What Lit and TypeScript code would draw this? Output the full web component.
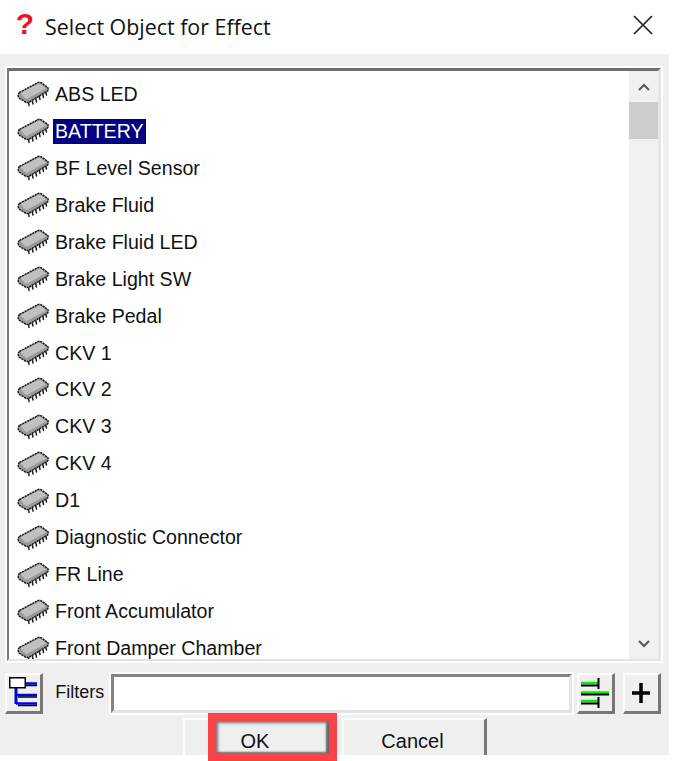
import { LitElement, html, css, svg } from "lit";
import { customElement } from "lit/decorators.js";

const ITEMS = ["ABS LED","BATTERY","BF Level Sensor","Brake Fluid","Brake Fluid LED","Brake Light SW","Brake Pedal","CKV 1","CKV 2","CKV 3","CKV 4","D1","Diagnostic Connector","FR Line","Front Accumulator","Front Damper Chamber"];

const chip = svg`<svg class="chip" width="32" height="26" viewBox="0 0 32 26">
  <g stroke="#1c1c1c" stroke-width="1.500" stroke-linecap="round">
    <path d="M11.500 20l.5 4.500M15 18.500l1 4.500M18.500 16.500l1 4.500M22 14l1 4.500M25.500 12l1 4.500M28.500 10l1 4"/>
  </g>
  <path d="M2.500 11.500 20.500 1.800c1.500-.6 2.700-.6 3.800 0l6.200 4.500c1 1 1 2.600 0 3.700L12.500 21c-1.500.8-2.500.8-4 0l-6-3.700c-1.800-1.400-1.800-4.600 0-5.800z" fill="#9a9a9a" stroke="#1c1c1c" stroke-width="1.500" stroke-dasharray="2.200 .7"/>
  <path d="M3.500 12 21 3c1-.4 2-.4 2.800 0l5.500 4.200L11 17.300c-1 .5-1.800.5-2.800 0z" fill="#c0c0c0"/>
</svg>`;

@customElement("app-root")
export class AppRoot extends LitElement {
  static styles = css`
    :host { display: block; width: 674px; height: 761px; background: #fff; overflow: hidden; font-family: "Liberation Sans", Arial, sans-serif; color: #111; }
    .title { height: 54px; width: 669px; display: flex; align-items: center; box-sizing: border-box; padding: 0 15px 0 15px; }
    .q { width: 20px; font: bold 30px "Liberation Sans", sans-serif; color: #f01020; margin-right: 10px; margin-top: -6px; text-align: center; }
    .tt { flex: 1; font: 21.400px "Open Sans", sans-serif; margin-top: -1px; }
    .close { display: block; margin-top: -5px; }
    .panel { width: 669px; height: 701px; background: #efefef; box-sizing: border-box; padding: 14px 8px 0 7px; }
    .frame { height: 593px; box-sizing: border-box; border-style: solid; border-width: 3px 3px 2px 2px; border-color: #6f6f6f #e4e4e4 #e4e4e4 #7a7a7a; outline: 2px solid #fdfdfd; background: #fff; display: flex; }
    .list { flex: 1; overflow: hidden; padding-top: 5px; min-width: 0; }
    .row { height: 36.950px; display: flex; align-items: center; padding-left: 8px; font-size: 19.600px; }
    .chip { flex: none; margin-right: 4px; }
    .label { padding: 0 2px; line-height: 25px; }
    .sel { background: #000080; color: #fff; }
    .scroll { width: 29px; background: #f0f0f0; display: flex; flex-direction: column; align-items: center; }
    .arrow { height: 31px; display: flex; align-items: center; justify-content: center; }
    .thumb { width: 29px; height: 37px; background: #cdcdcd; }
    .gap { flex: 1; }
    .filters { display: flex; align-items: stretch; height: 41px; margin-top: 12px; margin-left: -2px; }
    .btn3d { width: 39px; box-sizing: border-box; border-style: solid; border-width: 2px 3px 3px 2px; border-color: #fdfdfd #777 #777 #fdfdfd; display: flex; align-items: center; justify-content: center; background: #efefef; padding: 0; }
    .flabel { font-size: 18px; margin-left: 12px; width: 57px; align-self: center; padding-bottom: 3px; }
    .input { flex: none; width: 461px; box-sizing: border-box; background: #fff; border-style: solid; border-width: 3px; border-color: #858585 #e4e4e4 #e4e4e4 #858585; outline: 2px solid #fdfdfd; margin: 1px 5px 1px 0; }
    .plus { margin-left: 8px; }
    .actions { display: flex; height: 37px; margin-top: 4px; margin-left: 176px; }
    .act { box-sizing: border-box; background: #efefef; border-style: solid; font: 20px "Liberation Sans", sans-serif; color: #111; }
    .ok { position: relative; width: 156px; border-width: 2px 0 0 2px; border-color: #fdfdfd; padding: 7px 14px 0 0; }
    .mark { position: absolute; left: 23px; top: -7px; width: 129px; height: 48px; box-sizing: border-box; border: 8px solid #fb4245; box-shadow: inset 2px 2px 3px #777, inset -3px -1px 2px #666; }
    .cancel { width: 145px; border-width: 2px 3px 0 2px; border-color: #fdfdfd #777 #777 #fdfdfd; margin-left: 3px; padding: 7px 3px 0 0; }
  `;

  render() {
    return html`
      <div class="title">
        <span class="q">?</span>
        <span class="tt">Select Object for Effect</span>
        <svg class="close" width="22" height="22" viewBox="0 0 22 22"><path d="M2 2 20 20M20 2 2 20" stroke="#222" stroke-width="1.700" fill="none"/></svg>
      </div>
      <div class="panel">
        <div class="frame">
          <div class="list">
            ${ITEMS.map((t, i) => html`<div class="row">${chip}<span class="label ${i === 1 ? "sel" : ""}">${t}</span></div>`)}
          </div>
          <div class="scroll">
            <div class="arrow"><svg width="12" height="8" viewBox="0 0 12 8"><path d="M1 7 6 2l5 5" stroke="#555" stroke-width="2" fill="none"/></svg></div>
            <div class="thumb"></div>
            <div class="gap"></div>
            <div class="arrow"><svg width="12" height="8" viewBox="0 0 12 8"><path d="M1 1l5 5 5-5" stroke="#555" stroke-width="2" fill="none"/></svg></div>
          </div>
        </div>
        <div class="filters">
          <button class="btn3d">
            <svg width="30" height="32" viewBox="0 0 30 32">
              <path d="M7 10V27" stroke="#0000f0" stroke-width="3" fill="none"/>
              <path d="M7 18H28M7 26.500H28M15 6.500H28" stroke="#0000f0" stroke-width="2.500" fill="none"/>
              <path d="M16 8.500H28M9 20H28M9 28.500H28" stroke="#000" stroke-width="1.500" fill="none"/>
              <rect x=".75" y=".75" width="15.500" height="10" fill="#fff" stroke="#000" stroke-width="1.500"/>
            </svg>
          </button>
          <span class="flabel">Filters</span>
          <div class="input"></div>
          <button class="btn3d">
            <svg width="30" height="32" viewBox="0 0 30 32">
              <path d="M1 6H18M1 15.500H29M1 24H18" stroke="#00f000" stroke-width="2.500" fill="none"/>
              <path d="M1 8.500H18M1 17.500H29M1 26.500H18M18.500 1V12M18.500 20V31" stroke="#000" stroke-width="2" fill="none"/>
            </svg>
          </button>
          <button class="btn3d plus">
            <svg width="22" height="24" viewBox="0 0 22 24"><path d="M11 2V22M2 12H20" stroke="#000" stroke-width="3.500" fill="none"/></svg>
          </button>
        </div>
        <div class="actions">
          <button class="act ok">OK<span class="mark"></span></button>
          <button class="act cancel">Cancel</button>
        </div>
      </div>
    `;
  }
}
